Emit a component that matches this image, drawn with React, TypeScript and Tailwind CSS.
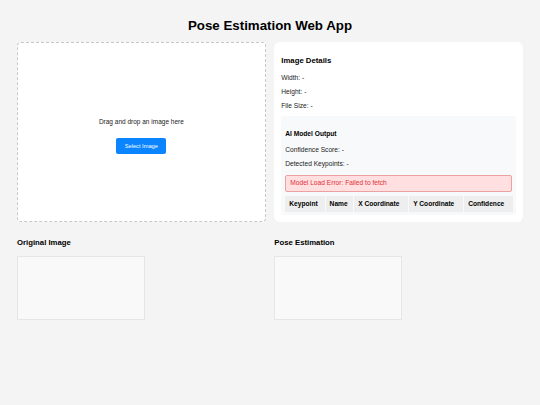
import React from "react";

export default function App() {
  const cols = [
    { label: "Keypoint", w: "w-[40px]" },
    { label: "Name", w: "w-[28px]" },
    { label: "X Coordinate", w: "w-[55px]" },
    { label: "Y Coordinate", w: "w-[55px]" },
    { label: "Confidence", w: "w-[50px]" },
  ];
  return (
    <div className="min-h-[405px] w-[540px] bg-[#f4f4f4] px-[17px] font-['Liberation_Sans',Arial,sans-serif] text-[#222] leading-[1.149]">
      <h1 className="pt-[18.4px] text-center text-[13.3px] font-bold text-black">
        Pose Estimation Web App
      </h1>
      <div className="mt-[8.3px] grid grid-cols-2 gap-[8.6px]">
        <div className="flex h-[180px] flex-col items-center rounded-[4px] border border-dashed border-[#c8c8c8] bg-white pt-[75px]">
          <p className="text-[6.5px] text-[#222]">Drag and drop an image here</p>
          <button className="mt-[12.7px] h-[15.6px] w-[50px] rounded-[2px] bg-[#0a84ff] text-[5.7px] text-white">
            Select Image
          </button>
        </div>
        <div className="h-[180px] rounded-[6px] bg-white px-[7px] pt-[7.5px]">
          <h3 className="mt-[7.5px] text-[7.75px] font-bold text-black">Image Details</h3>
          <div className="mt-[7.8px] flex flex-col gap-[6.64px] text-[6.64px] text-[#222]">
            <p>Width: -</p>
            <p>Height: -</p>
            <p>File Size: -</p>
          </div>
          <div className="mt-[6.4px] h-[99px] rounded-[3px] bg-[#f8f9fa] px-[4px] pt-[4.2px]">
            <h4 className="mt-[9.3px] text-[6.64px] font-bold text-black">AI Model Output</h4>
            <div className="mt-[8.6px] flex flex-col gap-[6.64px] text-[6.64px] text-[#222]">
              <p>Confidence Score: -</p>
              <p>Detected Keypoints: -</p>
            </div>
            <div className="mt-[6.9px] flex h-[17px] items-center rounded-[2px] border border-[#eca0a0] bg-[#ffdfdf] px-[4px] text-[6.64px] text-[#e0303a]">
              Model Load Error: Failed to fetch
            </div>
            <div className="mt-[4px] flex h-[16px] w-[228px] gap-[1px] bg-[#f8f9fa]">
              {cols.map((c) => (
                <div
                  key={c.label}
                  className={`${c.w} flex items-center bg-[#eeeeee] px-[4px] text-[6.64px] font-bold text-black whitespace-nowrap`}
                >
                  {c.label}
                </div>
              ))}
            </div>
          </div>
        </div>
      </div>
      <div className="mt-[16.8px] grid grid-cols-2 gap-[8.6px]">
        <div>
          <h3 className="text-[7.75px] font-bold text-black">Original Image</h3>
          <div className="mt-[8.2px] h-[64px] w-[128px] border border-[#e6e6e6] bg-[#f9f9f9]" />
        </div>
        <div>
          <h3 className="text-[7.75px] font-bold text-black">Pose Estimation</h3>
          <div className="mt-[8.2px] h-[64px] w-[128px] border border-[#e6e6e6] bg-[#f9f9f9]" />
        </div>
      </div>
    </div>
  );
}
